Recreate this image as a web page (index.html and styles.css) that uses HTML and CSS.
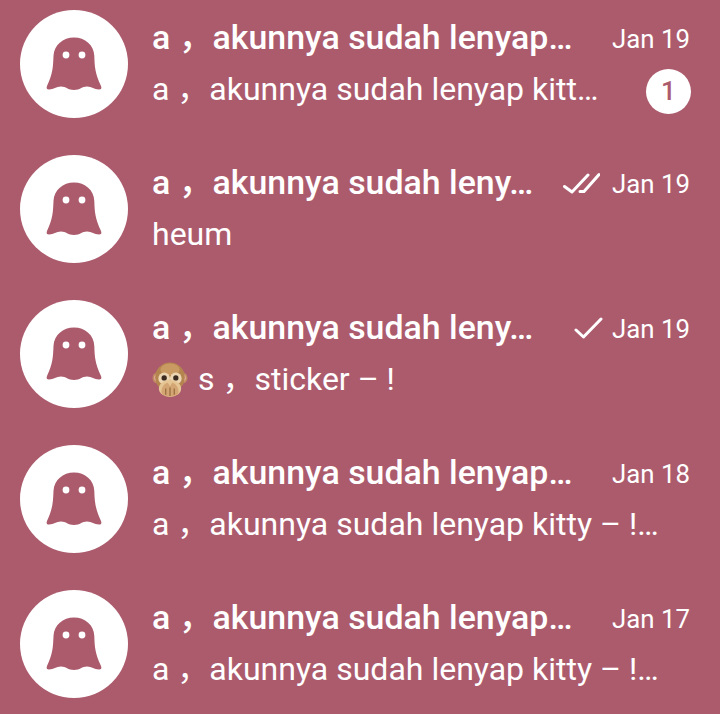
FILE: index.html
```html
<!DOCTYPE html>
<html lang="id">
<head>
<meta charset="utf-8">
<title>Chats</title>
<link rel="stylesheet" href="styles.css">
</head>
<body>
<svg class="defs" width="0" height="0" aria-hidden="true">
  <symbol id="ghost" viewBox="0 0 108 108">
    <circle cx="54" cy="54" r="54" fill="#fff"/>
    <path class="ghost-body" d="M54 27.5C43 27.5 34 35 33.500 46C33 57 33 63 27 76C26 78.500 27 79.500 29 79.500C34 79.500 36 76.500 41 76.500C46 76.500 48 80 54 80C60 80 62 76.500 67 76.500C72 76.500 74 79.500 79 79.500C81 79.500 82 78.500 81 76C75 63 74.700 57 74.300 46C74 35 65 27.500 54 27.500Z"/>
    <circle cx="46" cy="45" r="3.400" fill="#fff"/>
    <circle cx="62" cy="45" r="3.400" fill="#fff"/>
  </symbol>
</svg>
<main class="list">
  <article class="row">
    <svg class="avatar"><use href="#ghost"/></svg>
    <div class="body">
      <div class="line top"><span class="title">a ，akunnya sudah lenyap…</span><time class="date">Jan 19</time></div>
      <div class="line bottom"><span class="msg">a ，akunnya sudah lenyap kitt…</span><span class="badge">1</span></div>
    </div>
  </article>
  <article class="row">
    <svg class="avatar"><use href="#ghost"/></svg>
    <div class="body">
      <div class="line top"><span class="title">a ，akunnya sudah leny…</span>
        <svg class="tick double" viewBox="0 0 38 22"><path d="M2.500 14.500L10 20L26 3M18 19.500H22L37 2.500"/></svg>
        <time class="date">Jan 19</time></div>
      <div class="line bottom"><span class="msg">heum</span></div>
    </div>
  </article>
  <article class="row">
    <svg class="avatar"><use href="#ghost"/></svg>
    <div class="body">
      <div class="line top"><span class="title">a ，akunnya sudah leny…</span>
        <svg class="tick single" viewBox="0 0 29 22"><path d="M2 13L9.500 20L27 2"/></svg>
        <time class="date">Jan 19</time></div>
      <div class="line bottom">
        <svg class="emoji" viewBox="0 0 34 34">
          <ellipse cx="4.500" cy="15" rx="4" ry="5" fill="#c08a60"/>
          <ellipse cx="4.500" cy="15" rx="2.300" ry="3.200" fill="#eeb5ae"/>
          <ellipse cx="29.500" cy="15" rx="4" ry="5" fill="#c08a60"/>
          <ellipse cx="29.500" cy="15" rx="2.300" ry="3.200" fill="#eeb5ae"/>
          <circle cx="17" cy="14.500" r="14" fill="#b5854f"/>
          <ellipse cx="17" cy="7" rx="9" ry="5.500" fill="#c99a62"/>
          <ellipse cx="11.500" cy="15.500" rx="5.500" ry="5.500" fill="#ecd5b2"/>
          <ellipse cx="22.500" cy="15.500" rx="5.500" ry="5.500" fill="#ecd5b2"/>
          <circle cx="11.500" cy="15" r="2.500" fill="#3a2a20"/>
          <circle cx="22.500" cy="15" r="2.500" fill="#3a2a20"/>
          <ellipse cx="17" cy="25" rx="10.500" ry="8" fill="#e6c595"/>
          <path d="M9 30C8 24 12 20 15 19.500L17 23L19 19.500C22 20 26 24 25 30C21 33.500 13 33.500 9 30Z" fill="#d3a673"/>
          <path d="M13 25V31M17 24V32M21 25V31" stroke="#8f6238" stroke-width="1" fill="none"/>
        </svg>
        <span class="msg">s ，sticker – !</span>
      </div>
    </div>
  </article>
  <article class="row">
    <svg class="avatar"><use href="#ghost"/></svg>
    <div class="body">
      <div class="line top"><span class="title">a ，akunnya sudah lenyap…</span><time class="date">Jan 18</time></div>
      <div class="line bottom"><span class="msg">a ，akunnya sudah lenyap kitty – !…</span></div>
    </div>
  </article>
  <article class="row">
    <svg class="avatar"><use href="#ghost"/></svg>
    <div class="body">
      <div class="line top"><span class="title">a ，akunnya sudah lenyap…</span><time class="date">Jan 17</time></div>
      <div class="line bottom"><span class="msg">a ，akunnya sudah lenyap kitty – !…</span></div>
    </div>
  </article>
</main>
</body>
</html>
```
FILE: styles.css
```css
html, body {
  margin: 0;
  height: 100%;
  overflow: hidden;
  background: #ac5b6d;
}
.defs {
  position: absolute;
}
.ghost-body {
  fill: #ac5b6d;
}
.list {
  display: flex;
  flex-direction: column;
  padding-top: 10px;
  font-family: Roboto, "Noto Sans CJK SC", sans-serif;
  color: #fff;
}
.row {
  display: flex;
  height: 145px;
  padding-left: 20px;
  box-sizing: border-box;
}
.avatar {
  width: 108px;
  height: 108px;
  flex: none;
}
.body {
  margin-left: 24px;
  width: 538px;
  display: flex;
  flex-direction: column;
}
.line {
  display: flex;
  align-items: center;
}
.top {
  height: 50px;
  margin-top: 3px;
}
.bottom {
  height: 50px;
}
.title, .msg {
  white-space: nowrap;
  line-height: 40px;
}
.title {
  font-size: 33.900px;
  font-weight: 500;
  margin-top: 0;
}
.msg {
  font-size: 32px;
  font-weight: 400;
  margin-top: 2px;
}
.date {
  margin-left: auto;
  font-size: 25.800px;
  line-height: 40px;
  margin-top: 2px;
  white-space: nowrap;
}
.tick {
  margin-left: auto;
  fill: none;
  stroke: #fff;
  stroke-width: 3;
  stroke-linecap: round;
  stroke-linejoin: round;
}
.double {
  width: 38px;
  height: 22px;
  margin-right: 12px;
}
.single {
  width: 29px;
  height: 22px;
  margin-right: 9px;
}
.tick + .date {
  margin-left: 0;
}
.emoji {
  width: 36px;
  height: 36px;
  margin-top: 4px;
  margin-right: 10px;
  flex: none;
}
.badge {
  margin-left: auto;
  margin-right: -1px;
  margin-top: 6px;
  width: 45px;
  height: 45px;
  border-radius: 50%;
  background: #fff;
  color: #ac5b6d;
  font-size: 26px;
  font-weight: 500;
  display: flex;
  align-items: center;
  justify-content: center;
}
```
